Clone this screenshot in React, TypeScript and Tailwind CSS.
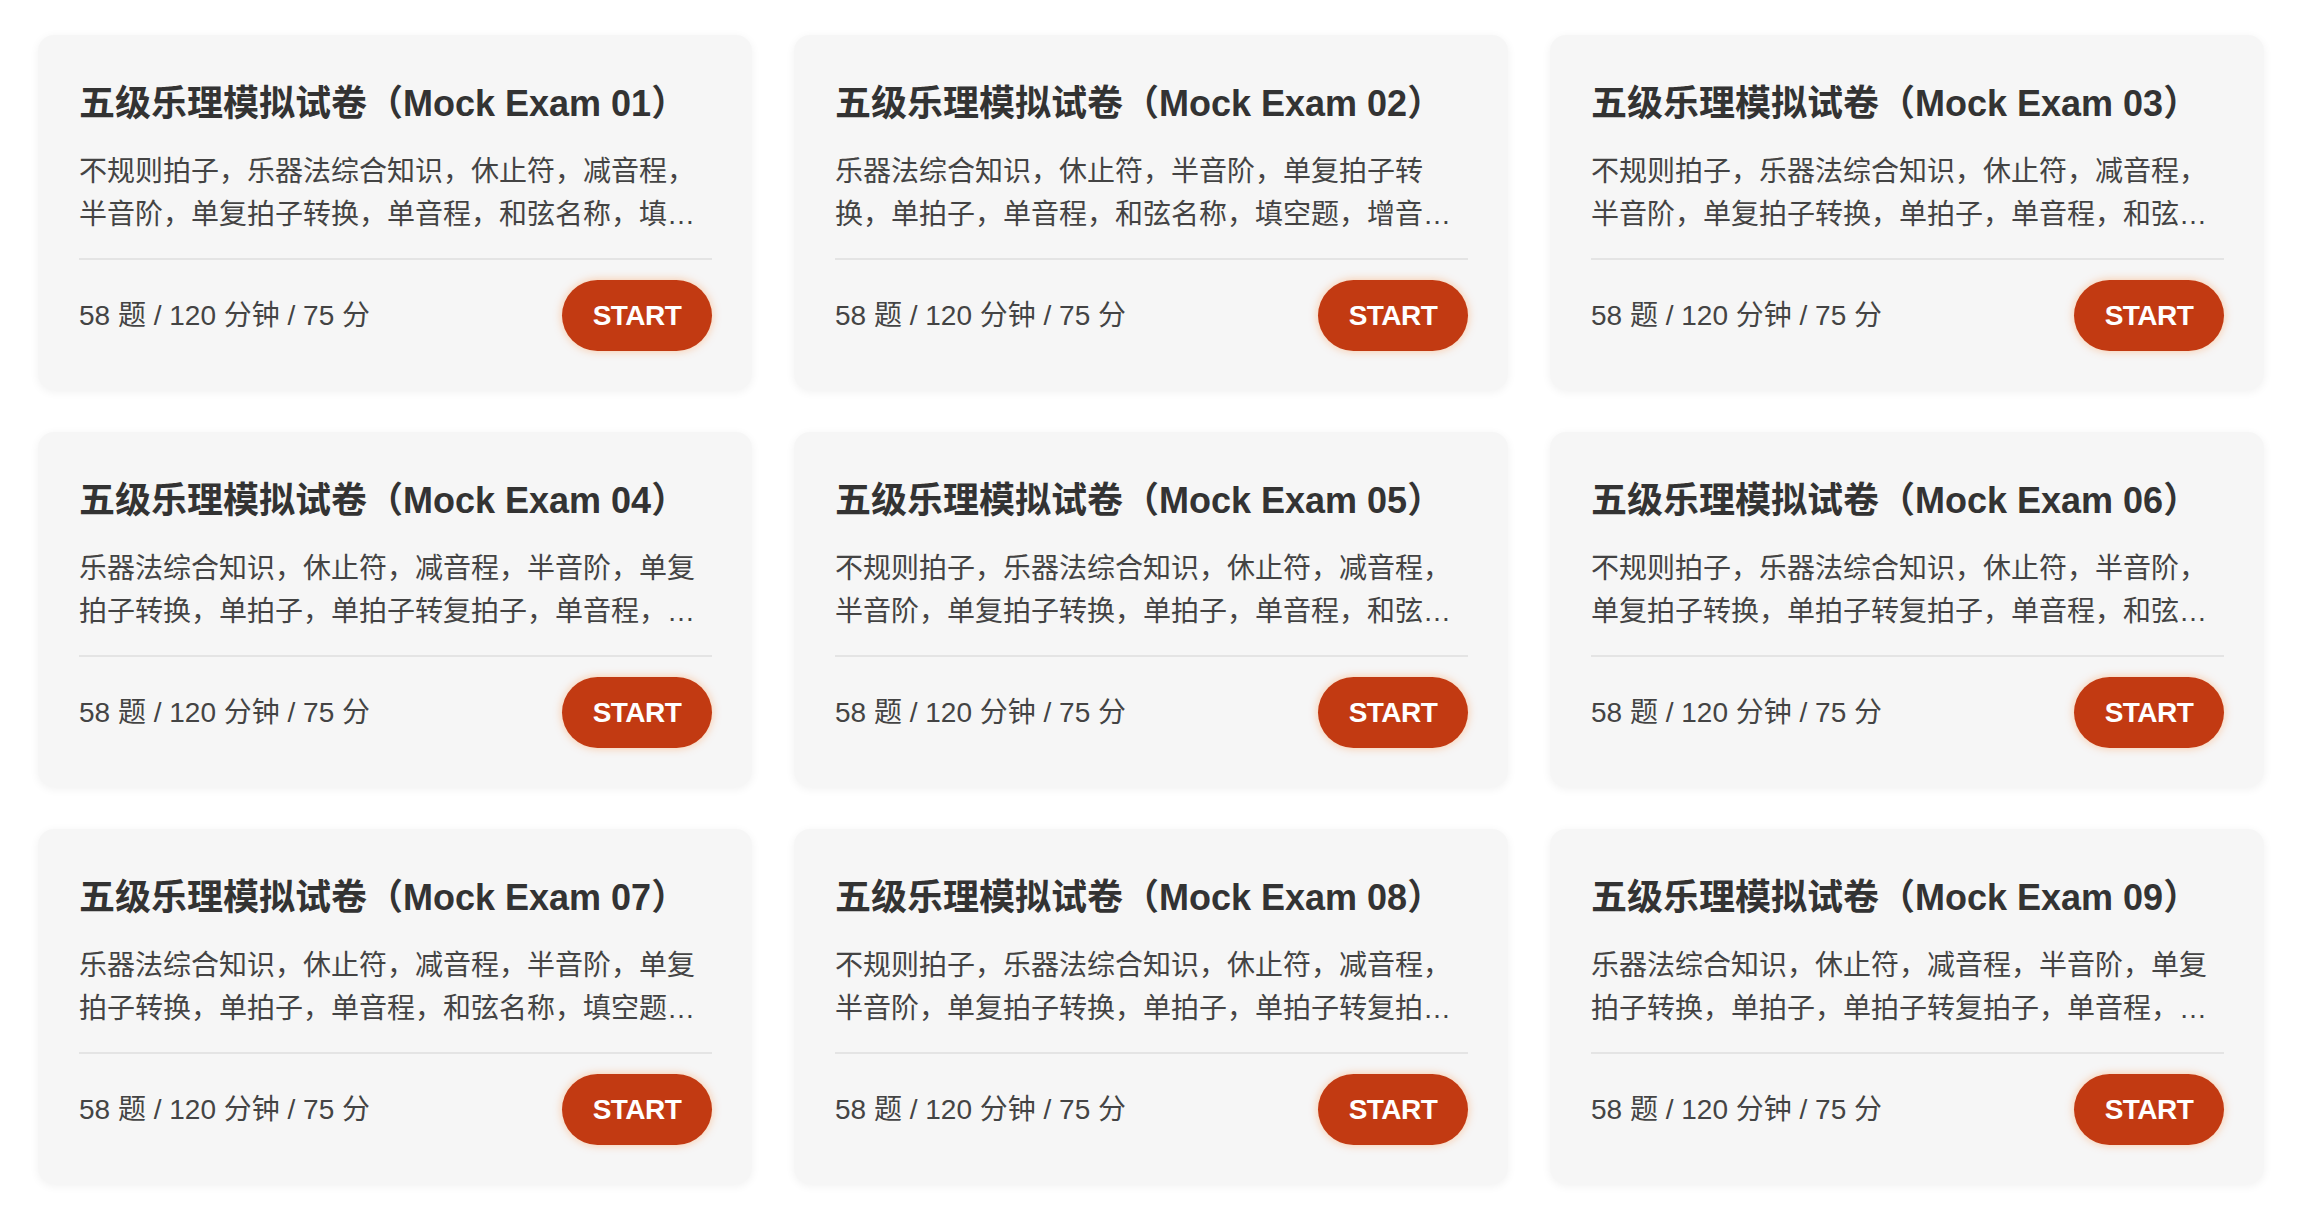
import React from "react";

const exams = [
  { n: "01", d: "不规则拍子，乐器法综合知识，休止符，减音程，半音阶，单复拍子转换，单音程，和弦名称，填空题，增音程，复音程" },
  { n: "02", d: "乐器法综合知识，休止符，半音阶，单复拍子转换，单拍子，单音程，和弦名称，填空题，增音程，复音程" },
  { n: "03", d: "不规则拍子，乐器法综合知识，休止符，减音程，半音阶，单复拍子转换，单拍子，单音程，和弦名称，填空题" },
  { n: "04", d: "乐器法综合知识，休止符，减音程，半音阶，单复拍子转换，单拍子，单拍子转复拍子，单音程，和弦名称，填空题" },
  { n: "05", d: "不规则拍子，乐器法综合知识，休止符，减音程，半音阶，单复拍子转换，单拍子，单音程，和弦名称，填空题" },
  { n: "06", d: "不规则拍子，乐器法综合知识，休止符，半音阶，单复拍子转换，单拍子转复拍子，单音程，和弦名称，填空题" },
  { n: "07", d: "乐器法综合知识，休止符，减音程，半音阶，单复拍子转换，单拍子，单音程，和弦名称，填空题，增音程" },
  { n: "08", d: "不规则拍子，乐器法综合知识，休止符，减音程，半音阶，单复拍子转换，单拍子，单拍子转复拍子，单音程" },
  { n: "09", d: "乐器法综合知识，休止符，减音程，半音阶，单复拍子转换，单拍子，单拍子转复拍子，单音程，和弦名称，填空题" },
];

function Card({ n, d }: { n: string; d: string }) {
  return (
    <div className="flex h-[355px] flex-col rounded-[16px] bg-[#f6f6f6] pl-[41px] pr-[40px] pt-[45px] shadow-[0_2px_10px_rgba(0,0,0,0.06)]">
      <h2 className="text-[36px] font-bold leading-[48px] text-[#333333] whitespace-nowrap">
        五级乐理模拟试卷（Mock Exam {n}）
      </h2>
      <p className="mt-[22px] line-clamp-2 text-[28px] leading-[43px] text-[#444444]">{d}</p>
      <div className="mt-[22px] h-[2px] bg-[#e4e4e4]" />
      <div className="mt-[20px] flex items-center justify-between">
        <span className="text-[28px] leading-[40px] text-[#444444]">58 题 / 120 分钟 / 75 分</span>
        <button className="flex h-[71px] w-[150px] items-center justify-center rounded-full bg-[#c23a12] text-[28px] font-bold tracking-[-0.5px] text-white shadow-[0_0_10px_rgba(255,110,0,0.35)]">
          START
        </button>
      </div>
    </div>
  );
}

export default function App() {
  return (
    <div
      className="min-h-screen bg-white px-[38px] pt-[35px] pb-[36px]"
      style={{ fontFamily: '"Liberation Sans", "Noto Sans CJK SC", sans-serif' }}
    >
      <div className="grid grid-cols-3 gap-x-[42px] gap-y-[42px]">
        {exams.map((e) => (
          <Card key={e.n} n={e.n} d={e.d} />
        ))}
      </div>
    </div>
  );
}
